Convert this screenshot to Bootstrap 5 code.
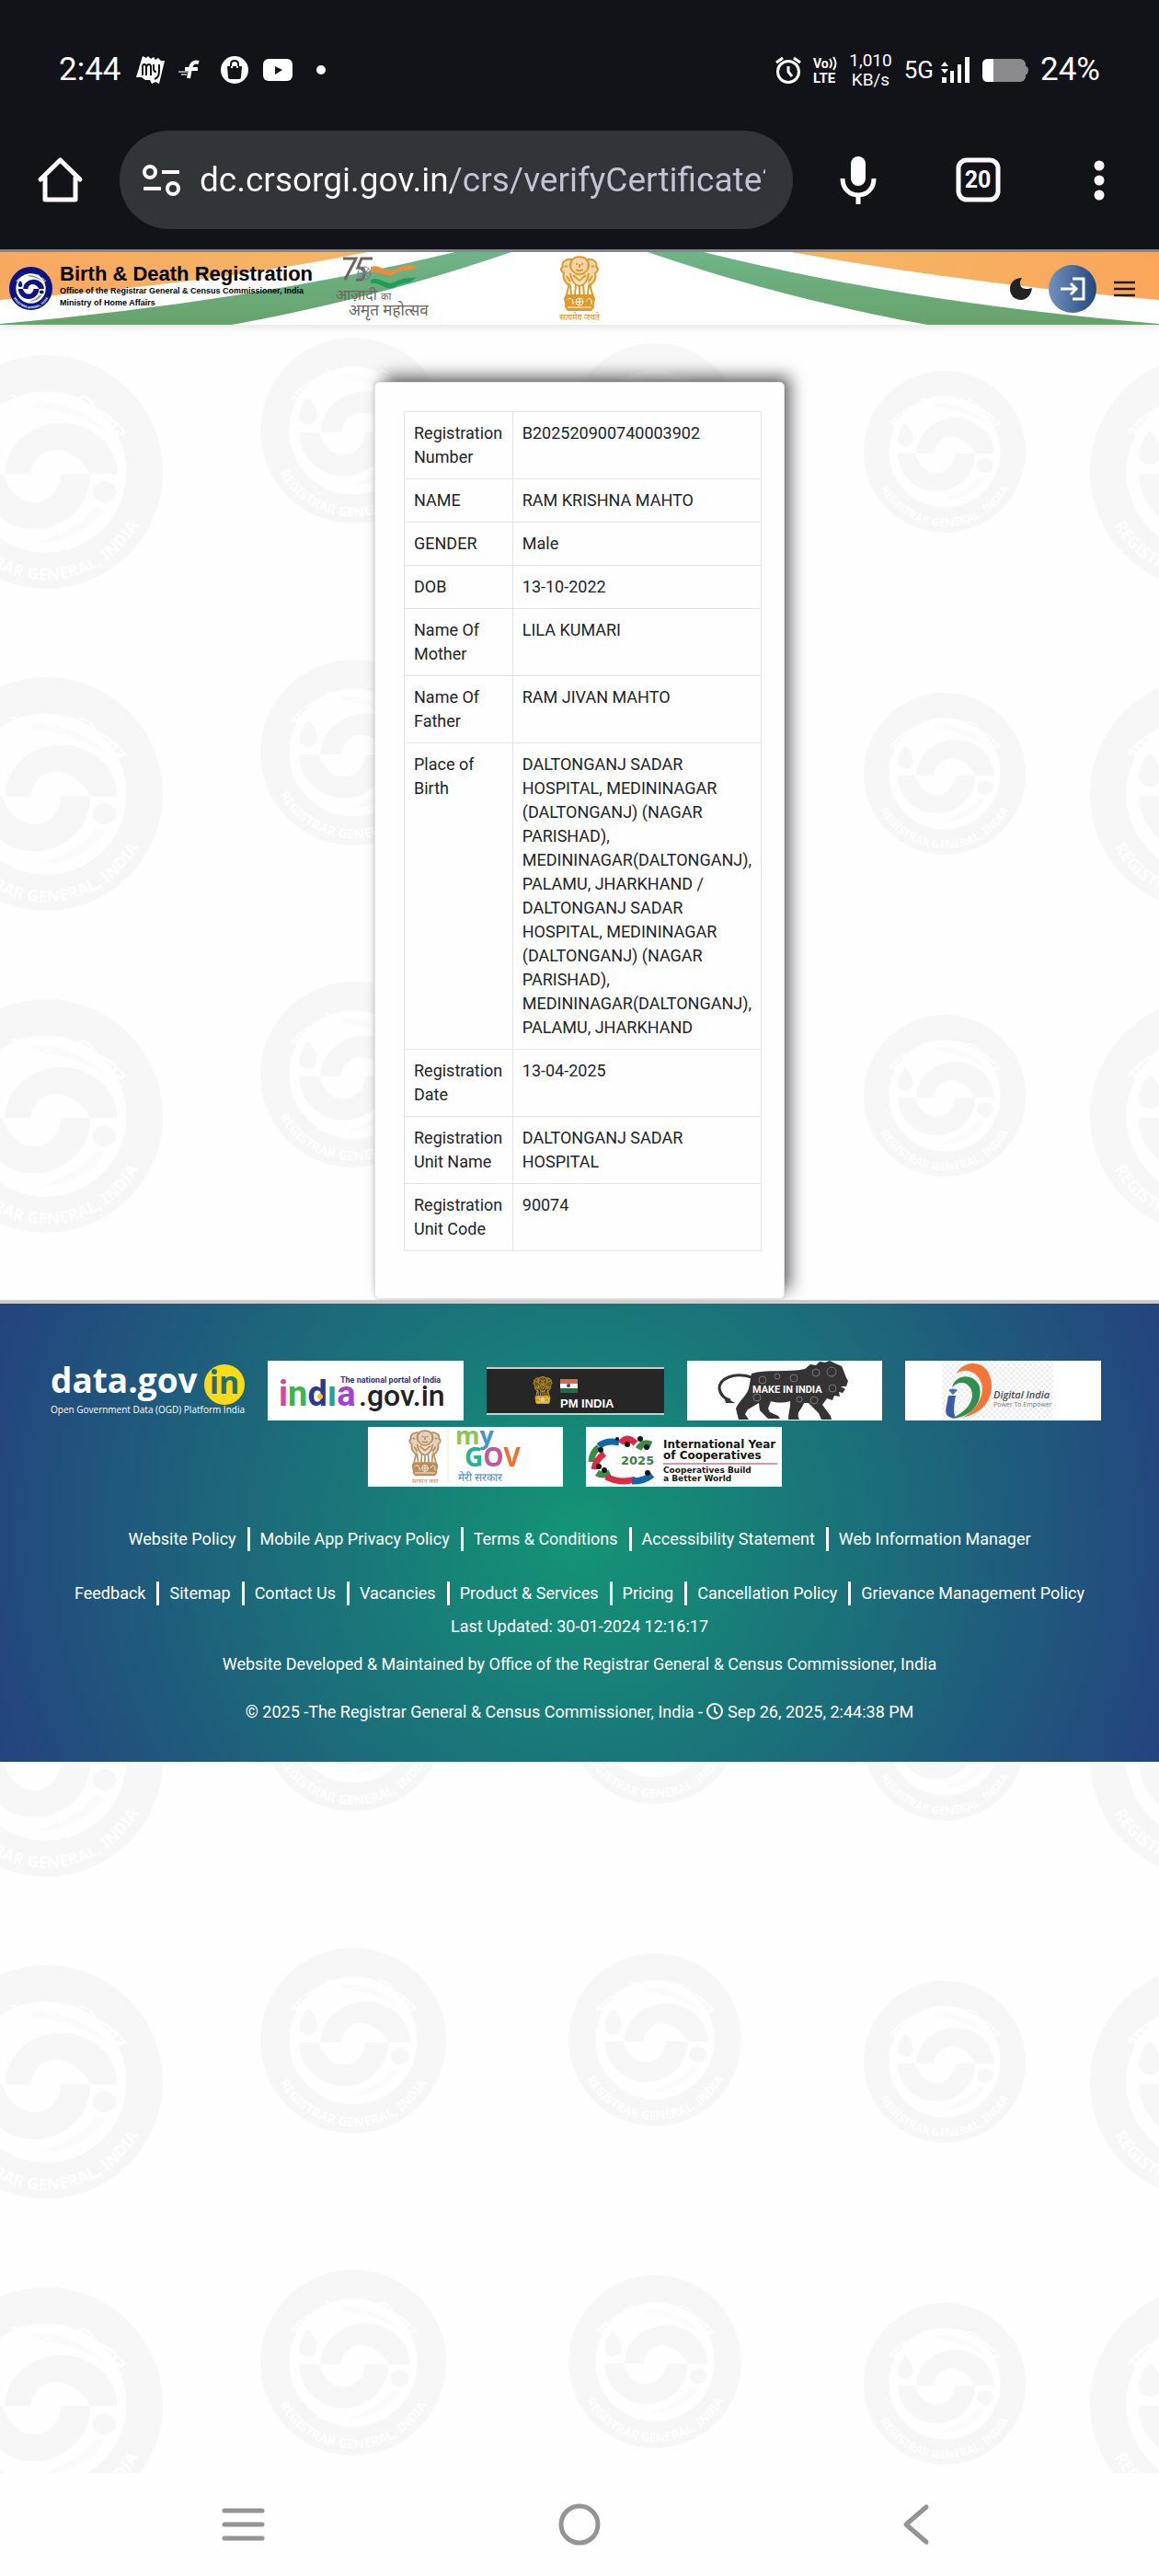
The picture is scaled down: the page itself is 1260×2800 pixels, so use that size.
<!DOCTYPE html>
<html lang="en">
<head>
<meta charset="utf-8">
<meta name="viewport" content="width=device-width, initial-scale=1">
<title>Birth &amp; Death Registration - Verify Certificate</title>
<link rel="stylesheet" href="https://cdn.jsdelivr.net/npm/bootstrap@5.3.0/dist/css/bootstrap.min.css">
<style>
  body { font-family: Roboto, "Liberation Sans", sans-serif; font-size: 18px; line-height: 26px; background: #fefefe; color: #212529; }
  svg { display: block; flex-shrink: 0; overflow: visible; }
  .plain-btn { background: none; border: 0; padding: 0; color: inherit; display: flex; align-items: center; justify-content: center; }
  .equal-part { flex: 1 1 0; }

  /* phone chrome */
  .phone-top { background: #121318; color: #fdfbff; border-bottom: 3px solid #85858d; }
  .status-bar { height: 142px; padding: 10px 64px 0; }
  .status-text { font-size: 35px; line-height: 40px; }
  .net-speed { font-size: 19px; line-height: 21px; text-align: center; }
  .net-type { font-size: 26px; line-height: 32px; }
  .status-right { gap: 13px; }
  .toolbar { padding: 0 41px 22px; }
  .toolbar .plain-btn { width: 49px; height: 49px; }
  .toolbar-end { gap: 82px; margin-left: 46px; }
  .omnibox { height: 107px; border-radius: 54px; background: #33343a; margin-left: 40px; padding: 0 30px 0 20px; gap: 18px; }
  .url-input { border: 0; padding: 0; outline: 0; min-width: 0; font-size: 37px; line-height: 54px; color: transparent;
    background: linear-gradient(90deg, #fdfbff 274px, #c4c5d2 274px); -webkit-background-clip: text; background-clip: text; }

  /* site header */
  .site-page { isolation: isolate; }
  .site-header { height: 79px; background: #fff; box-shadow: 0 2px 8px rgba(0,0,0,.12); padding: 0 10px; isolation: isolate; }
  .banner-art, .seal-wall { position: absolute; inset: 0; width: 100%; height: 100%; z-index: -1; }
  .brand-text { font-family: "Liberation Sans", Arial, sans-serif; font-weight: bold; color: #000; padding-bottom: 5px; }
  .brand-title { font-size: 22px; line-height: 24px; }
  .brand-sub { font-size: 9px; line-height: 13px; }
  .jubilee-logo { margin-left: 25px; }
  .login-btn { width: 52px; height: 52px; border-radius: 50%; background: linear-gradient(90deg, #7291bd, #23487f); }
  .header-tools { gap: 18px; color: #211a16; }

  /* certificate */
  .cert-main { padding-top: 62px; padding-bottom: 1px; }
  .cert-card { max-width: 446px; border: 1px solid #dee2e6; border-radius: 5px; background: #fefefe; padding: 31px 24px 51px 31px;
    box-shadow: 8px -8px 18px -2px rgba(0,0,0,.6), 0 0 5px rgba(0,0,0,.15); }
  .cert-table { --bs-table-bg: transparent; --bs-table-color: #212529; border-color: #e3e6e9; }
  .cert-table th, .cert-table td { padding: 10px; font-weight: 400; vertical-align: top; }
  .cert-table th { width: 118px; }

  /* footer */
  .site-footer { border-top: 4px solid #ccc; background: radial-gradient(circle farthest-corner at center, #139575, #24437f); color: #fff; padding-top: 62px; padding-bottom: 41px; }
  .partner-list { gap: 7px 25px; padding: 0 60px 44px 50px; }
  .foot-links { margin-bottom: 33px; }
  .foot-links + .foot-links { margin-bottom: 10px; }
  .foot-links li + li { border-left: 3px solid #fff; margin-left: 12px; padding-left: 11px; }
  .foot-links a { color: #fff; text-decoration: none; }
  .foot-note { margin-bottom: 15px; }
  .foot-note + .foot-note { margin-bottom: 26px; }

  .system-nav { height: 112px; padding: 0 81px; color: #949494; background: #fefefe; z-index: 1; }
</style>
</head>
<body class="d-flex flex-column min-vh-100">

<!-- shared drawings -->
<svg width="0" height="0" class="position-absolute" aria-hidden="true">
  <defs>
    <path id="ringTop" d="M-79 12A80 80 0 0 1 79 12"/>
    <path id="ringLow" d="M-89 16A90 90 0 0 0 89 16"/>
    <symbol id="seal" viewBox="-100 -100 200 200">
      <circle r="100" fill="currentColor"/>
      <g fill="#fefefe" font-family="'Noto Sans', 'Liberation Sans', sans-serif" font-size="17" font-weight="bold" text-anchor="middle">
        <text><textPath href="#ringTop" startOffset="50%">भारत के महारजिस्ट्रार</textPath></text>
        <text font-size="14"><textPath href="#ringLow" startOffset="50%">REGISTRAR GENERAL, INDIA</textPath></text>
      </g>
      <circle r="69" fill="#fefefe"/>
      <g fill="currentColor">
        <path d="M-35 2A48 44 0 0 1 61 2H38C32-10 20-19 8-19C-4-19-13-8-13 2Z"/>
        <path d="M-58 2A48 47 0 0 0 38 2H13C12 16 2 26-10 26C-24 26-32 16-37 2Z"/>
        <path d="M-49-35C-42-30-39-22-39-14C-41-4-55-4-58-13C-58-22-54-30-49-35Z"/>
        <ellipse cx="50" cy="17" rx="10" ry="9"/>
        <path d="M-12-60C15-62 40-48 52-34C38-44 18-52-12-56Z" opacity=".55"/>
        <path d="M50 32C38 50 18 60-6 60C14 54 32 44 42 30Z" opacity=".55"/>
      </g>
    </symbol>
    <symbol id="capital" viewBox="0 0 44 62">
      <g fill="none" stroke="currentColor" stroke-width="2" stroke-linejoin="round">
        <path d="M14 5C16 0 28 0 30 5C34 9 32 15 28 18C25 21 19 21 16 18C12 15 10 9 14 5Z" fill="currentColor" fill-opacity=".4"/>
        <path d="M14 4C7 3 2 7 4 12C0 14 3 18 5 19C3 25 8 31 12 33L13 42M30 4C37 3 42 7 40 12C44 14 41 18 39 19C41 25 36 31 32 33L31 42" fill="currentColor" fill-opacity=".4"/>
        <path d="M18 9H20M24 9H26M22 9V13M18 15C21 17 23 17 26 15"/>
        <path d="M12 19C13 27 17 32 22 33C27 32 31 27 32 19M15 21L22 27L29 21M8 22L12 28M36 22L32 28M9 12L6 11M35 12L38 11" fill="currentColor" fill-opacity=".3"/>
        <path d="M18 31L17 43M22 33V43M26 31L27 43M11 30L8 42M33 30L36 42"/>
      </g>
      <path d="M7 42H37L39 46C39 50 37 52 38 56L35 60H9L6 56C7 52 5 50 5 46Z" fill="currentColor"/>
      <g stroke="#fff" fill="none"><circle cx="22" cy="50" r="4"/><path d="M18 50H26M22 46V54M9 48C11 45 14 46 15 50V53M29 50C31 45 34 46 35 49V53M9 56H35"/></g>
    </symbol>
    <pattern id="sealTiles" width="1262" height="350" y="2" patternUnits="userSpaceOnUse">
      <g color="#f7f7f7">
        <use href="#seal" x="-77" y="110" width="254" height="254"/>
        <use href="#seal" x="-77" y="-240" width="254" height="254"/>
        <use href="#seal" x="1185" y="110" width="254" height="254"/>
        <use href="#seal" x="1185" y="-240" width="254" height="254"/>
        <use href="#seal" x="283" y="91" width="202" height="202"/>
        <use href="#seal" x="618" y="97" width="188" height="188"/>
        <use href="#seal" x="939" y="127" width="176" height="176"/>
      </g>
    </pattern>
  </defs>
</svg>

<header class="phone-top">
  <div class="status-bar d-flex align-items-center justify-content-between">
    <div class="d-flex align-items-center">
      <span class="status-text me-3">2:44</span>
      <svg width="32" height="32" viewBox="0 0 32 32" fill="#fff" class="me-3"><path d="M7 1L11 3L13 1L16 4L19 2L21 5L24 3L27 6L31 6L25 31L21 29L17 31L15 27L10 27L6 24L0 24Z"/><path d="M7 22V12Q7 10 9 10Q11 10 11 13V22M11 13Q12 10 14 10Q16 10 16 13V22M19 10V15Q19 18 22 18M25 10V18Q25 24 20 26" fill="none" stroke="#121318" stroke-width="2"/></svg>
      <svg width="20" height="24" viewBox="2 0 20 24" class="me-4"><path d="M22 4C16 2 14 6 13 10L11 21M7 11H21" fill="none" stroke="#fff" stroke-width="4"/><path d="M0 14H11M3 17H9" stroke="#999" stroke-width="2"/></svg>
      <svg width="30" height="30" viewBox="0 0 30 30" class="me-3"><circle cx="15" cy="15" r="15" fill="#fff"/><path d="M7 11H23L22 23Q22 25 20 25H10Q8 25 8 23Z" fill="#121318"/><path d="M11 13V9Q11 5 15 5Q19 5 19 9V13" fill="none" stroke="#121318" stroke-width="2"/><path d="M12 13V11M18 13V11" stroke="#fff" stroke-width="2"/></svg>
      <svg width="32" height="24" viewBox="0 0 32 24"><rect width="32" height="24" rx="6" fill="#fff"/><path d="M13 8V17L21 12Z" fill="#121318"/></svg>
      <svg width="60" height="10" viewBox="0 0 60 10"><circle cx="31" cy="5" r="5" fill="#fff"/></svg>
    </div>
    <div class="status-right d-flex align-items-center">
      <svg width="28" height="30" viewBox="0 0 28 30" fill="none" stroke="#fff" stroke-width="3"><circle cx="14" cy="17" r="11.5"/><path d="M14 11V17L18 22M1 7L8 2M27 7L20 2"/></svg>
      <svg width="26" height="28" viewBox="0 0 26 28" fill="#fff" font-family="Roboto, sans-serif" font-weight="bold"><text x="0" y="12" font-size="14">Vo</text><text x="0" y="28" font-size="15">LTE</text><path d="M18 2Q22 7 18 12M22 0Q27 7 22 14" fill="none" stroke="#fff" stroke-width="2"/></svg>
      <span class="net-speed">1,010<br>KB/s</span>
      <div class="d-flex align-items-center gap-2">
        <span class="net-type">5G</span>
        <svg width="32" height="28" viewBox="0 0 32 28" fill="#fff"><path d="M0 10L4 5L8 10ZM0 13H8L4 18ZM1 22H6V28H1ZM10 15H14V28H10ZM18 8H22V28H18ZM26 0H31V28H26Z"/></svg>
      </div>
      <svg width="50" height="25" viewBox="0 0 50 25"><rect width="47" height="25" rx="6" fill="#8b8b8d"/><path d="M46 8H48Q50 10 50 12Q50 15 48 17H46Z" fill="#8b8b8d"/><path d="M6 0H12V25H6Q0 25 0 19V6Q0 0 6 0Z" fill="#fff"/></svg>
      <span class="status-text">24%</span>
    </div>
  </div>
  <div class="toolbar d-flex align-items-center">
    <button class="plain-btn" type="button" aria-label="Home"><svg width="49" height="49" viewBox="0 0 49 49" fill="none" stroke="currentColor" stroke-width="5" stroke-linejoin="round" stroke-linecap="round"><path d="M3 24L24.500 3L46 24M8 22V46H41V22"/></svg></button>
    <div class="omnibox d-flex align-items-center flex-grow-1">
      <button class="plain-btn" type="button" aria-label="Site information"><svg width="42" height="34" viewBox="0 0 42 34" fill="none" stroke="currentColor" stroke-width="4"><circle cx="9" cy="8" r="6"/><path d="M22 8H41M2 26H21"/><circle cx="34" cy="26" r="6"/></svg></button>
      <input class="url-input flex-grow-1" type="text" aria-label="Address" value="dc.crsorgi.gov.in/crs/verifyCertificate?">
    </div>
    <div class="toolbar-end d-flex align-items-center">
      <button class="plain-btn" type="button" aria-label="Voice search"><svg width="40" height="52" viewBox="0 0 40 52"><rect x="12" width="16" height="32" rx="8" fill="currentColor"/><path d="M3 24C3 48 37 48 37 24M20 42V52" fill="none" stroke="currentColor" stroke-width="5"/></svg></button>
      <button class="plain-btn" type="button" aria-label="Open tabs"><svg width="49" height="49" viewBox="0 0 49 49"><rect x="3" y="3" width="43" height="43" rx="9" fill="none" stroke="currentColor" stroke-width="5"/><text x="24" y="33" text-anchor="middle" font-family="Roboto, sans-serif" font-weight="bold" font-size="25" fill="currentColor">20</text></svg></button>
      <button class="plain-btn" type="button" aria-label="Menu"><svg width="12" height="44" viewBox="0 0 12 44" fill="currentColor"><circle cx="6" cy="6" r="5.500"/><circle cx="6" cy="22" r="5.500"/><circle cx="6" cy="38" r="5.500"/></svg></button>
    </div>
  </div>
</header>

<div class="site-page position-relative flex-grow-1 overflow-hidden">
  <svg class="seal-wall" aria-hidden="true"><rect width="100%" height="100%" fill="url(#sealTiles)"/></svg>

  <header class="site-header position-relative d-flex align-items-center">
    <svg class="banner-art" viewBox="0 0 1260 79" preserveAspectRatio="none" aria-hidden="true">
      <defs>
        <linearGradient id="og" x1="0" x2="1"><stop stop-color="#f9a861"/><stop offset="1" stop-color="#f3b765"/></linearGradient>
        <linearGradient id="og2" x1="0" x2="1"><stop stop-color="#f3b765"/><stop offset="1" stop-color="#fba65b"/></linearGradient>
        <linearGradient id="gg" x1="0" x2="0" y1="0" y2="1"><stop stop-color="#6eb588"/><stop offset="1" stop-color="#68a26c"/></linearGradient>
      </defs>
      <path d="M0 0H400Q230 34 0 52Z" fill="url(#og)"/>
      <path d="M0 78Q270 54 495 0H556Q410 50 252 79H0Z" fill="url(#gg)"/>
      <path d="M860 0H1260V52Q1050 34 860 0Z" fill="url(#og2)"/>
      <path d="M704 0H765Q980 54 1260 78V79H1008Q850 50 704 0Z" fill="url(#gg)"/>
    </svg>
    <div class="equal-part d-flex align-items-center">
      <svg width="47" height="47" color="#0c1484"><use href="#seal"/></svg>
      <div class="brand-text ms-2 text-nowrap">
        <div class="brand-title">Birth &amp; Death Registration</div>
        <div class="brand-sub">Office of the Registrar General &amp; Census Commissioner, India</div>
        <div class="brand-sub">Ministry of Home Affairs</div>
      </div>
      <svg class="jubilee-logo" width="104" height="72" viewBox="0 0 104 72" font-family="'Noto Sans', sans-serif" fill="#6d6560">
        <path d="M8 3H22L10 26M40 3H28L24 13Q34 12 30 24Q28 27 22 26" fill="none" stroke="#6d6560" stroke-width="3"/>
        <circle cx="31" cy="19" r="7" fill="none" stroke="#6d7f8c"/><path d="M31 12V26M24 19H38M26 14L36 24M36 14L26 24" stroke="#6d7f8c"/>
        <path d="M38 12C48 8 54 20 64 15C76 9 82 10 89 12C80 18 72 14 63 20C54 24 48 16 38 18Z" fill="#f08b3c"/>
        <path d="M38 26C48 22 54 33 64 29C74 22 80 26 88 23C80 32 72 28 63 35C54 38 48 28 38 30Z" fill="#1ba05a"/>
        <text x="0" y="48" font-size="16">आज़ादी</text><text x="49" y="48" font-size="11">का</text><text x="14" y="65" font-size="17">अमृत महोत्सव</text>
      </svg>
    </div>
    <svg width="50" height="72" viewBox="0 0 50 72" color="#e09a2c"><use href="#capital" x="3" y="0" width="44" height="62"/><text x="25" y="70" text-anchor="middle" font-size="9" font-family="'Noto Sans', sans-serif" fill="#d98a26">सत्यमेव जयते</text></svg>
    <div class="header-tools equal-part d-flex align-items-center justify-content-end">
      <button class="plain-btn" type="button" aria-label="Dark mode"><svg width="24" height="24" viewBox="0 0 24 24" fill="#222"><path d="M13 0C8 7 12 15 24 11C23 19 18 24 12 24C5 24 0 19 0 12C0 5 5 0 13 0Z"/></svg></button>
      <a class="login-btn d-flex align-items-center justify-content-center" href="#" aria-label="Log in"><svg width="26" height="24" viewBox="0 0 26 24" fill="none" stroke="#fff" stroke-width="3"><path d="M13 1H25V23H13M0 12H16M11 6L17 12L11 18"/></svg></a>
      <button class="plain-btn me-3" type="button" aria-label="Open menu"><svg width="24" height="18" viewBox="1 0 24 18" stroke="currentColor" stroke-width="2.500"><path d="M2 2H25M2 9H25M2 16H25"/></svg></button>
    </div>
  </header>

  <main class="cert-main">
    <div class="cert-card w-100 mx-auto">
      <table class="table table-bordered cert-table mb-0">
        <tbody>
          <tr><th scope="row">Registration Number</th><td>B202520900740003902</td></tr>
          <tr><th scope="row">NAME</th><td>RAM KRISHNA MAHTO</td></tr>
          <tr><th scope="row">GENDER</th><td>Male</td></tr>
          <tr><th scope="row">DOB</th><td>13-10-2022</td></tr>
          <tr><th scope="row">Name Of Mother</th><td>LILA KUMARI</td></tr>
          <tr><th scope="row">Name Of Father</th><td>RAM JIVAN MAHTO</td></tr>
          <tr><th scope="row">Place of Birth</th><td>DALTONGANJ SADAR HOSPITAL, MEDININAGAR (DALTONGANJ) (NAGAR PARISHAD), MEDININAGAR(DALTONGANJ), PALAMU, JHARKHAND / DALTONGANJ SADAR HOSPITAL, MEDININAGAR (DALTONGANJ) (NAGAR PARISHAD), MEDININAGAR(DALTONGANJ), PALAMU, JHARKHAND</td></tr>
          <tr><th scope="row">Registration Date</th><td>13-04-2025</td></tr>
          <tr><th scope="row">Registration Unit Name</th><td>DALTONGANJ SADAR HOSPITAL</td></tr>
          <tr><th scope="row">Registration Unit Code</th><td>90074</td></tr>
        </tbody>
      </table>
    </div>
  </main>

  <footer class="site-footer text-center">
    <div class="partner-list d-flex flex-wrap justify-content-center align-items-center">
      <a href="#" aria-label="data.gov.in"><svg width="212" height="65" viewBox="0 0 212 65" font-family="'Open Sans', sans-serif" font-weight="bold" fill="#fff">
        <text x="1" y="35" font-size="37">data.gov</text>
        <circle cx="190" cy="26" r="22" fill="#fbdb16"/><text x="190" y="36" font-size="34" text-anchor="middle" fill="#2a6d6d">ın</text><circle cx="179" cy="12" r="3" fill="#2a6d6d"/>
        <text x="1" y="57" font-size="10" font-weight="500">Open Government Data (OGD) Platform India</text></svg></a>
      <a href="#" aria-label="india.gov.in"><svg width="213" height="65" viewBox="0 0 213 65" font-family="Roboto, sans-serif" font-weight="bold">
        <rect width="213" height="65" fill="#fff"/>
        <text x="79" y="24" font-size="9" fill="#2c2f86">The national portal of India</text>
        <text x="12" y="49" font-size="38"><tspan fill="#dd4595">i</tspan><tspan fill="#3cb54a">n</tspan><tspan fill="#2b3990">d</tspan><tspan fill="#14a79d">ı</tspan><tspan fill="#a63fd6">a</tspan></text>
        <circle cx="57" cy="39" r="3" fill="#f7c51e"/>
        <text x="99" y="49" font-size="32" font-weight="500" fill="#222">.gov.in</text></svg></a>
      <a href="#" aria-label="PM India"><svg width="193" height="52" viewBox="0 0 193 52" font-family="'Liberation Sans', sans-serif">
        <rect width="193" height="52" fill="#c5cfcf"/><rect y="2" width="193" height="48" fill="#262626"/>
        <svg x="50" y="10" width="22" height="31" color="#d0a020"><use href="#capital"/></svg>
        <path d="M80 13H99V18H80Z" fill="#d9654b"/><path d="M80 18H99V23H80Z" fill="#fff"/><path d="M80 23H99V28H80Z" fill="#127345"/><circle cx="89" cy="20" r="2" fill="#446"/>
        <text x="80" y="44" font-size="13" font-weight="bold" fill="#fff">PM INDIA</text></svg></a>
      <a href="#" aria-label="Make in India"><svg width="212" height="65" viewBox="0 0 212 65" font-family="Roboto, sans-serif" font-weight="bold">
        <rect width="212" height="65" fill="#fff"/>
        <path d="M70 18C50 12 35 20 35 30C36 38 42 42 47 43" fill="none" stroke="#353333" stroke-width="3"/><path d="M40 39L52 46L42 46Z" fill="#353333"/>
        <path d="M70 14C85 9 110 13 128 9L134 4L140 5L144 1L150 2L155 0L161 3L168 6C171 12 172 18 175 22L173 28L167 28L172 31L169 35L165 34L166 39L160 38L158 43L152 41L147 48L156 60L157 64H146L143 57L132 46H127C124 54 118 56 122 64H110C110 56 113 50 112 44C104 46 98 46 91 44L88 52L90 56L99 60L101 63H88L79 54L78 46L66 53L63 58L67 64H56L53 52C56 44 65 38 67 30Z" fill="#353333"/>
        <g fill="none" stroke="#777"><circle cx="82" cy="21" r="4"/><circle cx="98" cy="17" r="3"/><circle cx="116" cy="19" r="4"/><circle cx="140" cy="13" r="4"/><circle cx="157" cy="12" r="5"/><circle cx="158" cy="30" r="4"/><circle cx="76" cy="40" r="4"/><circle cx="122" cy="42" r="3"/><circle cx="138" cy="43" r="4"/></g>
        <text x="71" y="35" font-size="11" fill="#fff">MAKE IN INDIA</text></svg></a>
      <a href="#" aria-label="Digital India"><svg width="213" height="65" viewBox="0 0 213 65" font-family="'Open Sans', sans-serif">
        <defs><pattern id="chk" width="6" height="6" patternUnits="userSpaceOnUse"><path d="M0 0H3V3H0ZM3 3H6V6H3Z" fill="#efefef"/></pattern></defs>
        <rect width="213" height="65" fill="#fff"/><rect x="40" width="121" height="65" fill="url(#chk)"/>
        <path d="M56 14C62 2 80-2 90 12C100 30 92 56 62 62C80 52 88 34 82 22C76 10 64 8 56 14Z" fill="#f37435"/>
        <path d="M51 29C54 16 72 12 80 26C86 42 74 62 50 63C66 56 76 44 72 32C68 22 58 22 51 29Z" fill="#2f8f4d"/>
        <path d="M47 38H55C53 48 52 56 55 62C44 63 43 56 45 49Z" fill="#3a5ca8"/><path d="M47 32Q52 29 57 32L52 37Z" fill="#3a6fc0"/>
        <text x="96" y="41" font-size="11" font-style="italic" font-weight="600" fill="#4a4a4a">Digital India</text><text x="96" y="50" font-size="7" fill="#777">Power To Empower</text></svg></a>
      <a href="#" aria-label="myGov"><svg width="212" height="65" viewBox="0 0 212 65" font-family="'Open Sans', sans-serif" font-weight="bold">
        <rect width="212" height="65" fill="#fff"/>
        <svg x="43" y="3" width="38" height="52" color="#b98d5c"><use href="#capital"/></svg>
        <text x="62" y="61" font-size="6" text-anchor="middle" fill="#b98d5c" font-weight="normal">सत्यमेव जयते</text>
        <path d="M87 2V60" stroke="#f3e6d0"/>
        <text x="95" y="19" font-size="27"><tspan fill="#8bc750">m</tspan><tspan fill="#4794cf">y</tspan></text>
        <text x="105" y="43" font-size="28"><tspan fill="#22b495">G</tspan><tspan fill="#c2559e">O</tspan><tspan fill="#f26d2b">V</tspan></text>
        <text x="98" y="59" font-size="12" font-weight="normal" fill="#4e86cf">मेरी सरकार</text></svg></a>
      <a href="#" aria-label="International Year of Cooperatives 2025"><svg width="213" height="65" viewBox="0 0 213 65" font-family="'DejaVu Sans', sans-serif" font-weight="bold" fill="#161616">
        <rect width="213" height="65" fill="#fff"/>
        <g fill="none" stroke-width="7"><path d="M14 21Q22 14 36 17" stroke="#1168a8"/><path d="M38 18Q44 8 54 18" stroke="#dc2b45"/><path d="M57 24Q62 15 71 19" stroke="#3d8a4d"/><path d="M6 38Q6 28 14 22" stroke="#3d8a4d"/><path d="M9 46Q10 36 20 29" stroke="#dc2b45"/><path d="M12 50Q18 54 26 50" stroke="#3d8a4d"/><path d="M22 54Q36 62 54 57" stroke="#dc2b45"/><path d="M50 59Q64 59 72 52" stroke="#1168a8"/></g>
        <circle cx="16" cy="25" r="3"/><circle cx="34" cy="13" r="2"/><circle cx="45" cy="19" r="3"/><circle cx="59" cy="13" r="3"/><circle cx="66" cy="22" r="3"/><circle cx="14" cy="43" r="3"/><circle cx="20" cy="47" r="3"/><circle cx="67" cy="50" r="3"/>
        <text x="38" y="41" font-size="13" fill="#3f7d46">2025</text>
        <text x="84" y="23" font-size="12">International Year</text><text x="84" y="35" font-size="12">of Cooperatives</text>
        <path d="M84 40H208" stroke="#9b3a52"/>
        <text x="84" y="50" font-size="9">Cooperatives Build</text><text x="84" y="59" font-size="9">a Better World</text></svg></a>
    </div>

    <ul class="foot-links list-unstyled d-flex flex-wrap justify-content-center">
      <li><a href="#">Website Policy</a></li><li><a href="#">Mobile App Privacy Policy</a></li><li><a href="#">Terms &amp; Conditions</a></li><li><a href="#">Accessibility Statement</a></li><li><a href="#">Web Information Manager</a></li>
    </ul>
    <ul class="foot-links list-unstyled d-flex flex-wrap justify-content-center">
      <li><a href="#">Feedback</a></li><li><a href="#">Sitemap</a></li><li><a href="#">Contact Us</a></li><li><a href="#">Vacancies</a></li><li><a href="#">Product &amp; Services</a></li><li><a href="#">Pricing</a></li><li><a href="#">Cancellation Policy</a></li><li><a href="#">Grievance Management Policy</a></li>
    </ul>
    <p class="foot-note">Last Updated: 30-01-2024 12:16:17</p>
    <p class="foot-note">Website Developed &amp; Maintained by Office of the Registrar General &amp; Census Commissioner, India</p>
    <p class="mb-0">© 2025 -The Registrar General &amp; Census Commissioner, India - <svg class="d-inline-block align-text-bottom" width="18" height="22" viewBox="0 0 18 22" fill="none" stroke="#fff" stroke-width="2"><circle cx="9" cy="11" r="8"/><path d="M9 6V11L12 14"/></svg> Sep 26, 2025, 2:44:38 PM</p>
  </footer>
</div>

<nav class="system-nav position-relative d-flex" aria-label="System navigation">
  <button class="plain-btn equal-part" type="button" aria-label="Recent apps"><svg width="47" height="38" viewBox="0 0 47 38" stroke="currentColor" stroke-width="5" stroke-linecap="round"><path d="M3 4H44M3 19H44M3 34H44"/></svg></button>
  <button class="plain-btn equal-part" type="button" aria-label="Home screen"><svg width="46" height="46" viewBox="0 0 46 46" fill="none" stroke="currentColor" stroke-width="5"><circle cx="23" cy="23" r="20"/></svg></button>
  <button class="plain-btn equal-part" type="button" aria-label="Back"><svg width="30" height="44" viewBox="0 0 30 44" fill="none" stroke="currentColor" stroke-width="5" stroke-linecap="round" stroke-linejoin="round"><path d="M26 3L4 22L26 41"/></svg></button>
</nav>

<script src="https://cdn.jsdelivr.net/npm/bootstrap@5.3.0/dist/js/bootstrap.bundle.min.js"></script>
</body>
</html>
